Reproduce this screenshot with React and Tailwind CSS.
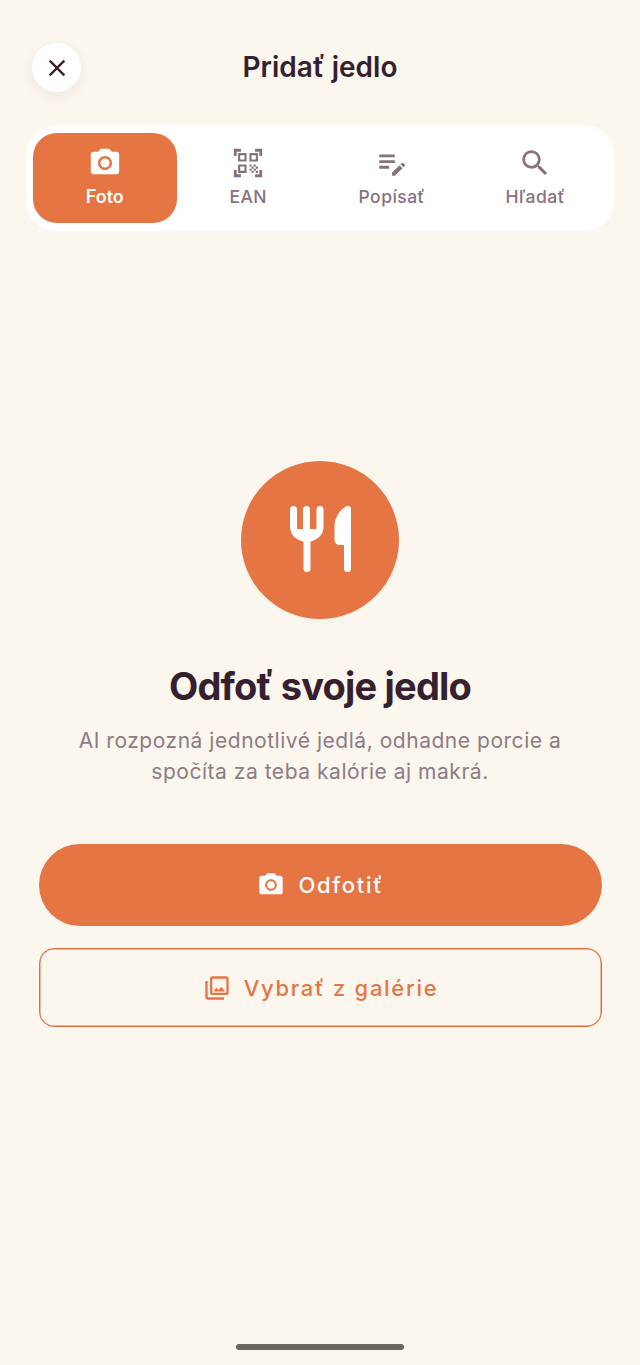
import React from "react";
import { MdPhotoCamera, MdQrCodeScanner, MdEditNote, MdSearch, MdOutlinePhotoLibrary, MdClose } from "react-icons/md";

const tabs = [
  { label: "Foto", Icon: MdPhotoCamera, active: true },
  { label: "EAN", Icon: MdQrCodeScanner },
  { label: "Popísať", Icon: MdEditNote },
  { label: "Hľadať", Icon: MdSearch },
];

function Cutlery() {
  return (
    <svg width="64" height="68" viewBox="0 0 64 68" fill="#ffffff" className="mt-[-2px] ml-[1px]">
      <path d="M1 4.5a3.5 3.5 0 0 1 7 0V24H14V4.5a3.5 3.5 0 0 1 7 0V24H27.5V4.5a3.5 3.5 0 0 1 7 0V22C34.5 30 28 35 21.5 36.5V63.5a3.5 3.5 0 0 1-7 0V36.5C7.5 35 1 30 1 22Z" />
      <path d="M62 4.5V63.5a3.5 3.5 0 0 1-7 0V40H51Q46 40 45.5 35V22C45.5 12 52 3 58 1.2 61 .5 62 2 62 4.5Z" />
    </svg>
  );
}

export default function App() {
  return (
    <div className="w-[640px] h-[1365px] overflow-hidden flex flex-col bg-[#fbf6ee] font-['Inter',sans-serif] text-[#35202f]">
      <header className="relative flex items-center justify-center h-[49px] mt-[43px] mx-[32px]">
        <button className="absolute left-0 top-0 w-[49px] h-[49px] rounded-full bg-white flex items-center justify-center shadow-[0_4px_14px_rgba(60,40,30,0.07)]">
          <MdClose size={28} color="#35202f" />
        </button>
        <h1 className="text-[28px] leading-[49px] font-semibold">Pridať jedlo</h1>
      </header>

      <nav className="mt-[33px] mx-[26px] h-[106px] rounded-[30px] bg-white py-[8px] pl-[7px] pr-[7px] grid grid-cols-4 gap-0 w-[588px]">
        {tabs.map(({ label, Icon, active }) => (
          <div
            key={label}
            className={`flex flex-col items-center pt-[13px] rounded-[24px] ${active ? "bg-[#e67544] text-white" : "text-[#86717e]"}`}
          >
            <Icon size={34} />
            <span className={`mt-[5px] leading-[24px] ${active ? "text-[18px] font-semibold" : "text-[17.5px] font-[450] tracking-[0.45px]"}`}>{label}</span>
          </div>
        ))}
      </nav>

      <main className="flex flex-col items-center mt-[230px] px-[39px]">
        <div className="w-[158px] h-[158px] rounded-full bg-[#e67544] flex items-center justify-center">
          <Cutlery />
        </div>
        <h2 className="mt-[44px] text-[38px] leading-[46px] font-bold tracking-[-0.8px]">Odfoť svoje jedlo</h2>
        <p className="mt-[16px] text-center text-[21px] leading-[31px] tracking-[0.53px] text-[#8d7c86]">
          AI rozpozná jednotlivé jedlá, odhadne porcie a
          <br />
          spočíta za teba kalórie aj makrá.
        </p>
        <div className="self-start mt-[57px] w-[563px] flex flex-col gap-[22px]">
          <button className="w-full h-[82px] rounded-full bg-[#e67544] text-white flex items-center justify-center gap-[13px]">
            <MdPhotoCamera size={28} />
            <span className="text-[22px] font-[450] tracking-[1.7px]">Odfotiť</span>
          </button>
          <button className="w-full h-[79px] pt-[1px] rounded-[15px] border border-[#e06f3f] shadow-[inset_0_0_0_0.5px_#e67544] text-[#e67544] flex items-center justify-center gap-[13px]">
            <MdOutlinePhotoLibrary size={28} />
            <span className="text-[22px] font-[450] tracking-[1.7px]">Vybrať z galérie</span>
          </button>
        </div>
      </main>

      <div className="mt-auto mb-[15px] mx-auto w-[168px] h-[6px] rounded-full bg-[#6b665f]" />
    </div>
  );
}
